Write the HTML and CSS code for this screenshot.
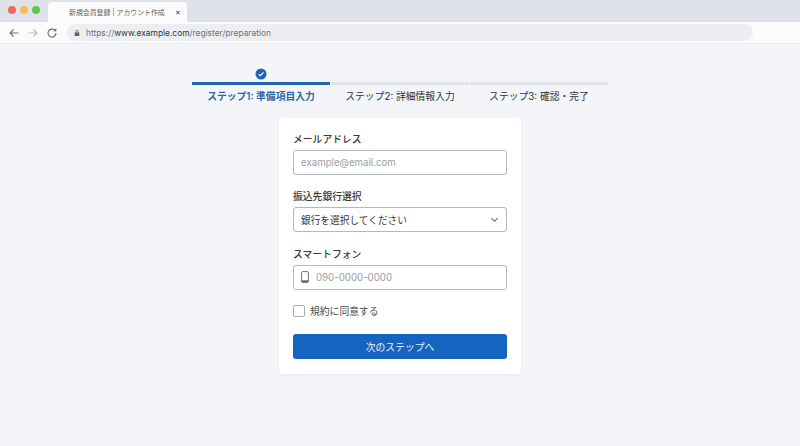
FILE: index.html
```
<!DOCTYPE html>
<html lang="ja">
<head>
  <meta charset="UTF-8" />
  <title>新規会員登録 | アカウント作成</title>
  <link rel="stylesheet" href="styles.css">
</head>
<body>
  <!-- Browser chrome -->
  <div class="tabbar">
    <div class="lights">
      <span class="light red"></span>
      <span class="light yellow"></span>
      <span class="light green"></span>
    </div>
    <div class="tab">
      <span class="tab-title">新規会員登録 | アカウント作成</span>
      <span class="tab-close">✕</span>
    </div>
  </div>
  <div class="addressbar">
    <svg class="nav-icon" viewBox="0 0 12 12"><path d="M10.5 6H2M5.5 2.5 2 6l3.5 3.5" fill="none" stroke="#6b6f75" stroke-width="1.1"/></svg>
    <svg class="nav-icon" viewBox="0 0 12 12"><path d="M1.5 6H10M6.5 2.5 10 6l-3.5 3.5" fill="none" stroke="#b9bcc1" stroke-width="1.1"/></svg>
    <svg class="nav-icon" viewBox="0 0 12 12"><path d="M10 6a4 4 0 1 1-1.2-2.8" fill="none" stroke="#5f6368" stroke-width="1.1"/><path d="M10.3 1.2v3H7.3z" fill="#5f6368"/></svg>
    <div class="url">
      <svg class="lock" viewBox="0 0 8 10"><path d="M1 4.2h6V9H1z" fill="#5f6368"/><path d="M2.3 4.2V3a1.7 1.7 0 0 1 3.4 0v1.2" fill="none" stroke="#5f6368"/></svg>
      <span class="url-text">https://<b>www.example.com</b>/register/preparation</span>
    </div>
  </div>

  <!-- Page -->
  <div class="page">
    <div class="steps">
      <div class="step active">
        <div class="step-mark">
          <svg class="check" viewBox="0 0 12 12"><circle cx="6" cy="6" r="5.5" fill="#1f65b0"/><path d="M3.6 6.1 5.3 7.7 8.4 4.5" fill="none" stroke="#fff" stroke-width="1.1"/></svg>
        </div>
        <div class="step-line"></div>
        <div class="step-label">ステップ1: 準備項目入力</div>
      </div>
      <div class="step">
        <div class="step-mark"></div>
        <div class="step-line"></div>
        <div class="step-label">ステップ2: 詳細情報入力</div>
      </div>
      <div class="step">
        <div class="step-mark"></div>
        <div class="step-line"></div>
        <div class="step-label">ステップ3: 確認・完了</div>
      </div>
    </div>

    <div class="card">
      <div class="field">
        <div class="field-label">メールアドレス</div>
        <div class="input placeholder">example@email.com</div>
      </div>
      <div class="field">
        <div class="field-label">振込先銀行選択</div>
        <div class="input select">
          <span>銀行を選択してください</span>
          <svg class="chevron" viewBox="0 0 10 6"><path d="M1.5 1 5 4.5 8.5 1" fill="none" stroke="#5f6368" stroke-width="1.2"/></svg>
        </div>
      </div>
      <div class="field">
        <div class="field-label">スマートフォン</div>
        <div class="input placeholder">
          <svg class="phone" viewBox="0 0 8 12"><rect x="0.6" y="0.6" width="6.8" height="10.8" rx="1.2" fill="none" stroke="#6b6f75" stroke-width="1"/><path d="M0.6 9.2h6.8v1a1.2 1.2 0 0 1-1.2 1.2H1.8a1.2 1.2 0 0 1-1.2-1.2z" fill="#6b6f75"/></svg>
          <span>090-0000-0000</span>
        </div>
      </div>
      <div class="agree">
        <span class="checkbox"></span>
        <span>規約に同意する</span>
      </div>
      <div class="button">次のステップへ</div>
    </div>
  </div>
</body>
</html>
```

FILE: styles.css
```
* {
  margin: 0;
  padding: 0;
  box-sizing: border-box;
}
html, body {
  height: 100%;
}
body {
  font-family: "Inter", "Noto Sans CJK JP", sans-serif;
  background-color: #f3f5f8;
  color: #2b2e33;
  display: flex;
  flex-direction: column;
  overflow: hidden;
}

/* Browser chrome */
.tabbar {
  height: 22px;
  background-color: #dfe2e8;
  display: flex;
  align-items: flex-end;
}
.lights {
  width: 48px;
  height: 22px;
  display: flex;
  gap: 4px;
  padding: 6px 0 0 8px;
}
.light {
  width: 8px;
  height: 8px;
  border-radius: 50%;
}
.red { background-color: #ee6a5f; }
.yellow { background-color: #f5bd4f; }
.green { background-color: #62c554; }
.tab {
  width: 139px;
  height: 20px;
  background-color: #fbfbfc;
  border-radius: 4px 4px 0 0;
  display: flex;
  align-items: center;
  padding: 0 6px 0 21px;
  justify-content: space-between;
}
.tab-title {
  font-size: 6.9px;
  color: #5f6368;
  white-space: nowrap;
}
.tab-close {
  font-size: 7px;
  color: #44474b;
}
.addressbar {
  height: 22px;
  background-color: #fbfbfc;
  border-bottom: 1px solid #e8eaed;
  display: flex;
  align-items: center;
  padding: 0 0 0 8px;
  gap: 7px;
}
.nav-icon {
  width: 12px;
  height: 12px;
}
.url {
  margin-left: 2px;
  width: 686px;
  height: 17px;
  background-color: #eceef1;
  border-radius: 9px;
  display: flex;
  align-items: center;
  padding-left: 7px;
  gap: 6px;
}
.lock {
  width: 6px;
  height: 8px;
}
.url-text {
  font-size: 8.4px;
  color: #6f7378;
}
.url-text b {
  font-weight: 400;
  color: #33363a;
}

/* Step indicator */
.page {
  flex: 1;
  display: flex;
  flex-direction: column;
  align-items: center;
}
.steps {
  display: flex;
  gap: 1px;
  margin-top: 24px;
}
.step {
  width: 138px;
  display: flex;
  flex-direction: column;
  align-items: center;
}
.step-mark {
  height: 12px;
  margin-bottom: 2px;
}
.check {
  width: 12px;
  height: 12px;
  display: block;
}
.step-line {
  width: 100%;
  height: 3px;
  background-color: #e1e3e6;
}
.step-label {
  font-size: 9.8px;
  margin-top: 5px;
  line-height: 14px;
  color: #2f3236;
}
.step.active .step-line {
  background-color: #1f65b0;
}
.step.active .step-label {
  color: #2a66a8;
  font-weight: 600;
}

/* Form card */
.card {
  width: 242px;
  height: 256px;
  margin-top: 14px;
  background-color: #ffffff;
  border-radius: 4px;
  box-shadow: 0 1px 3px rgba(0, 0, 0, 0.06);
  padding: 14px 14px;
}
.field {
  margin-bottom: 14.4px;
}
.field-label {
  font-size: 9.8px;
  font-weight: 500;
  line-height: 16px;
  margin-bottom: 2px;
  color: #33363a;
}
.input {
  height: 25px;
  border: 1px solid #b4b7bb;
  border-radius: 3px;
  display: flex;
  align-items: center;
  padding: 0 7px;
  font-size: 9.7px;
}
.placeholder {
  color: #9a9ea3;
}
.select {
  justify-content: space-between;
  color: #33363a;
}
.chevron {
  width: 9px;
  height: 6px;
}
.phone {
  width: 8px;
  height: 12px;
  margin-right: 7px;
}
.agree {
  height: 13px;
  display: flex;
  align-items: center;
  gap: 5px;
  font-size: 9.8px;
  color: #44474b;
  margin-bottom: 17px;
}
.checkbox {
  width: 12px;
  height: 12px;
  border: 1px solid #a9acb0;
  border-radius: 2px;
  background-color: #fff;
}
.button {
  height: 25px;
  background-color: #1565c0;
  color: #e8f0fa;
  border-radius: 3px;
  font-size: 9.8px;
  display: flex;
  align-items: center;
  justify-content: center;
}
```
